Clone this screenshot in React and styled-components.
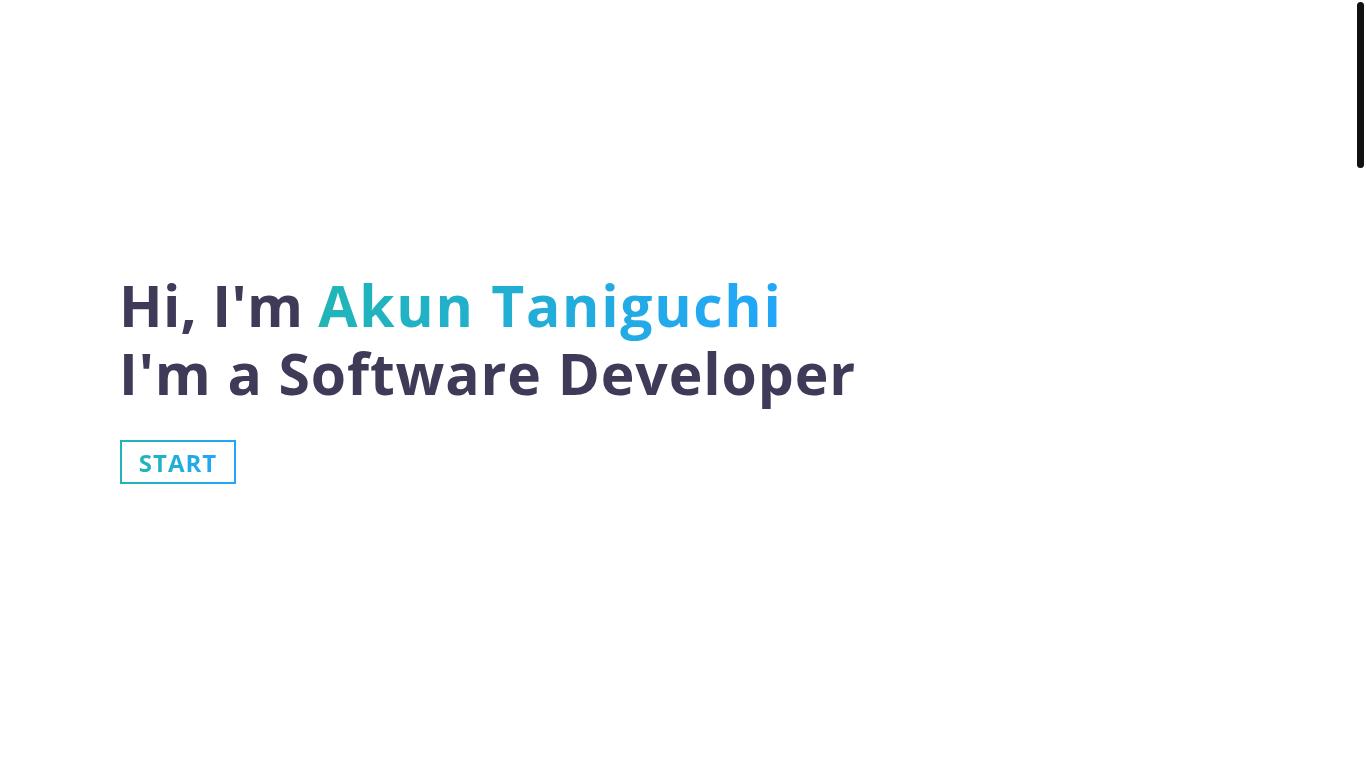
import React from "react";
import styled, { createGlobalStyle } from "styled-components";

const Global = createGlobalStyle`
  html, body { margin: 0; padding: 0; background: #fff; }
  body { font-family: "Open Sans", "Liberation Sans", sans-serif; overflow: hidden; }
`;

const Page = styled.main`
  position: relative;
  height: 768px;
`;

const Hero = styled.section`
  height: 100%;
  display: flex;
  flex-direction: column;
  justify-content: center;
  padding: 0 120px 16px;
  box-sizing: border-box;
`;

const ScrollThumb = styled.div`
  position: fixed;
  top: 2px;
  right: 2px;
  width: 7px;
  height: 166px;
  border-radius: 4px;
  background: #111;
`;

const Title = styled.h1`
  margin: 3px 0 0 -1px;
  font-family: "Open Sans", sans-serif;
  font-weight: 700;
  font-size: 57px;
  line-height: 68px;
  letter-spacing: 0.9px;
  color: #3f3a57;
`;

const Line = styled.span`
  display: block;
  letter-spacing: ${(p) => p.$ls || "0.9px"};
`;

const Gradient = styled.span`
  letter-spacing: 1.7px;
  background: linear-gradient(90deg, #21b5b6 0%, #22a6fb 100%);
  -webkit-background-clip: text;
  background-clip: text;
  color: transparent;
`;

const StartButton = styled.button`
  margin-top: 33px;
  align-self: flex-start;
  width: 116px;
  height: 44px;
  padding: 0;
  border: 2px solid transparent;
  background:
    linear-gradient(#fff, #fff) padding-box,
    linear-gradient(90deg, #21b5b6, #22a6fb) border-box;
  cursor: pointer;
  display: flex;
  align-items: center;
  justify-content: center;
`;

const ButtonText = styled.span`
  font-family: "Open Sans", sans-serif;
  font-weight: 700;
  font-size: 24px;
  letter-spacing: 1px;
  background: linear-gradient(90deg, #21b5b6, #22a6fb);
  -webkit-background-clip: text;
  background-clip: text;
  color: transparent;
`;

export default function App() {
  return (
    <>
      <Global />
      <Page>
        <Hero>
          <Title>
            <Line $ls="0.3px">
              Hi, I'm <Gradient>Akun Taniguchi</Gradient>
            </Line>
            <Line>I'm a Software Developer</Line>
          </Title>
          <StartButton>
            <ButtonText>START</ButtonText>
          </StartButton>
        </Hero>
        <ScrollThumb />
      </Page>
    </>
  );
}
